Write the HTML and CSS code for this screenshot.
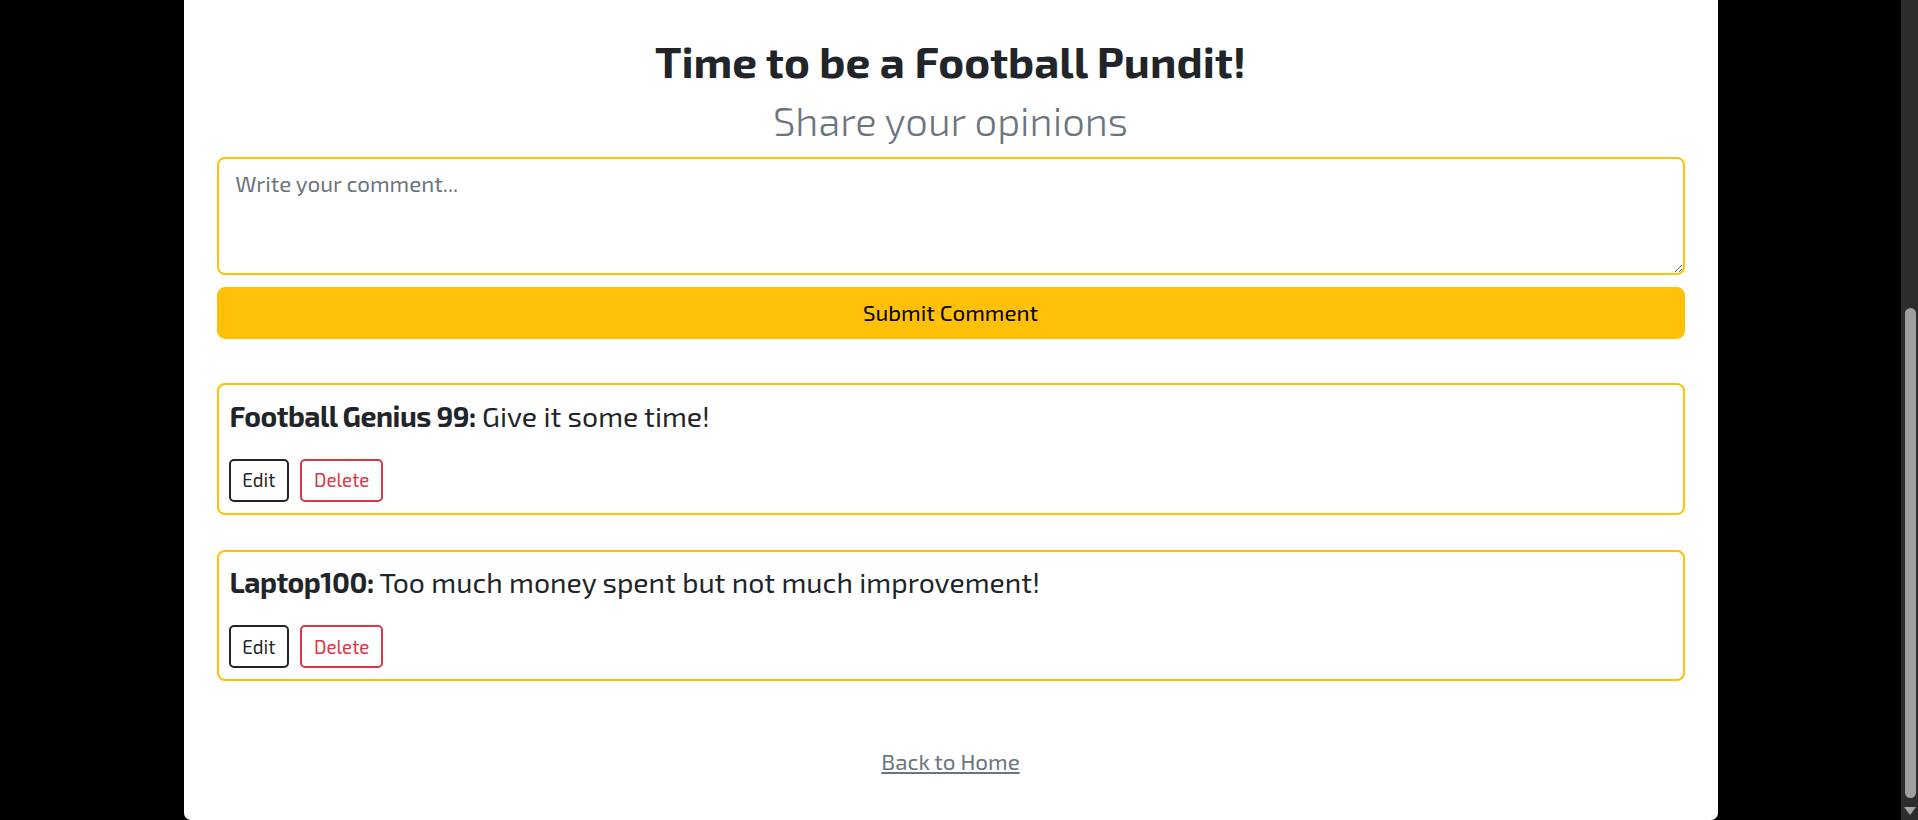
FILE: index.html
```html
<!DOCTYPE html>
<html lang="en">
<head>
<meta charset="utf-8">
<title>Football Pundit - Comments</title>
<link rel="stylesheet" href="styles.css">
</head>
<body>
<div class="viewport">
  <main class="page">
    <header class="intro">
      <h1 class="title">Time to be a Football Pundit!</h1>
      <p class="subtitle">Share your opinions</p>
    </header>

    <form class="comment-form">
      <textarea class="comment-input" placeholder="Write your comment..."></textarea>
      <button type="button" class="submit-btn">Submit Comment</button>
    </form>

    <section class="comments">
      <article class="comment">
        <p class="comment-text"><strong>Football Genius 99:</strong> Give it some time!</p>
        <div class="comment-actions">
          <button type="button" class="btn-outline btn-edit">Edit</button>
          <button type="button" class="btn-outline btn-delete">Delete</button>
        </div>
      </article>
      <article class="comment">
        <p class="comment-text"><strong>Laptop100:</strong> Too much money spent but not much improvement!</p>
        <div class="comment-actions">
          <button type="button" class="btn-outline btn-edit">Edit</button>
          <button type="button" class="btn-outline btn-delete">Delete</button>
        </div>
      </article>
    </section>

    <nav class="back">
      <a class="back-link" href="#">Back to Home</a>
    </nav>
  </main>
</div>
<div class="scrollbar" aria-hidden="true">
  <div class="scrollbar-thumb"></div>
  <div class="scrollbar-arrow"></div>
</div>
</body>
</html>
```
FILE: styles.css
```css
html {
  background: #000;
}
body {
  display: flex;
  height: 820px;
  margin: 0;
  overflow: hidden;
  background: #000;
  font-family: "Exo 2", Roboto, "Liberation Sans", sans-serif;
  color: #212529;
}
.viewport {
  flex: 1;
  display: flex;
  justify-content: center;
  align-items: flex-end;
  min-width: 0;
}
.page {
  flex: 0 0 auto;
  box-sizing: border-box;
  width: 1534px;
  padding: 60px 33px 41.2px;
  background: #fff;
  border-radius: 0 0 7px 7px;
}
.intro {
  text-align: center;
}
.title {
  margin: 0 0 9px;
  font-size: 44px;
  line-height: 52.8px;
  font-weight: 700;
  color: #212529;
}
.subtitle {
  margin: 0 0 13.6px;
  font-size: 40px;
  line-height: 46px;
  font-weight: 300;
  color: #6c757d;
}
.comment-form {
  display: flex;
  flex-direction: column;
  gap: 12px;
}
.comment-input {
  box-sizing: border-box;
  width: 100%;
  height: 118.5px;
  margin: 0;
  padding: 8px 16.8px;
  border: 2px solid #ffc107;
  border-radius: 8px;
  background: #fff;
  color: #212529;
  font-family: inherit;
  font-size: 22.4px;
  line-height: 1.5;
  outline: none;
  resize: vertical;
}
.comment-input::placeholder {
  color: #6c757d;
  opacity: 1;
}
.submit-btn {
  box-sizing: border-box;
  width: 100%;
  margin: 0;
  padding: 8px 16px;
  border: 1px solid #ffc107;
  border-radius: 8px;
  background: #ffc107;
  color: #000;
  font-family: inherit;
  font-size: 22.4px;
  line-height: 1.5;
  cursor: pointer;
}
.comments {
  display: flex;
  flex-direction: column;
  gap: 35px;
  margin-top: 44.6px;
}
.comment {
  box-sizing: border-box;
  padding: 9.5px 10px 11px;
  border: 2px solid #ffc107;
  border-radius: 8px;
}
.comment-text {
  margin: 0 0 22px 1px;
  font-size: 28.4px;
  line-height: 42px;
  color: #212529;
}
.comment-text strong {
  font-weight: 700;
  letter-spacing: -0.5px;
}
.comment-actions {
  display: flex;
  gap: 11px;
}
.btn-outline {
  box-sizing: border-box;
  margin: 0;
  padding: 5.4px 11.8px;
  border: 2px solid;
  border-radius: 5px;
  background: #fff;
  font-family: inherit;
  font-size: 18.8px;
  line-height: 1.5;
  cursor: pointer;
}
.btn-edit {
  color: #212529;
  border-color: #212529;
}
.btn-delete {
  color: #dc3545;
  border-color: #dc3545;
}
.back {
  margin-top: 64px;
  text-align: center;
}
.back-link {
  font-size: 22.4px;
  line-height: 33.6px;
  color: #6c757d;
  text-decoration: underline;
}
.scrollbar {
  flex: 0 0 17px;
  display: flex;
  flex-direction: column;
  align-items: center;
  box-sizing: border-box;
  padding-top: 308px;
  background: #2c2c2c;
}
.scrollbar-thumb {
  width: 11px;
  height: 490px;
  margin-left: 1px;
  border-radius: 6px;
  background: #9f9f9f;
}
.scrollbar-arrow {
  width: 0;
  height: 0;
  margin-top: 9px;
  margin-left: 1px;
  border-left: 6px solid transparent;
  border-right: 6px solid transparent;
  border-top: 8px solid #a3a3a3;
}
```
